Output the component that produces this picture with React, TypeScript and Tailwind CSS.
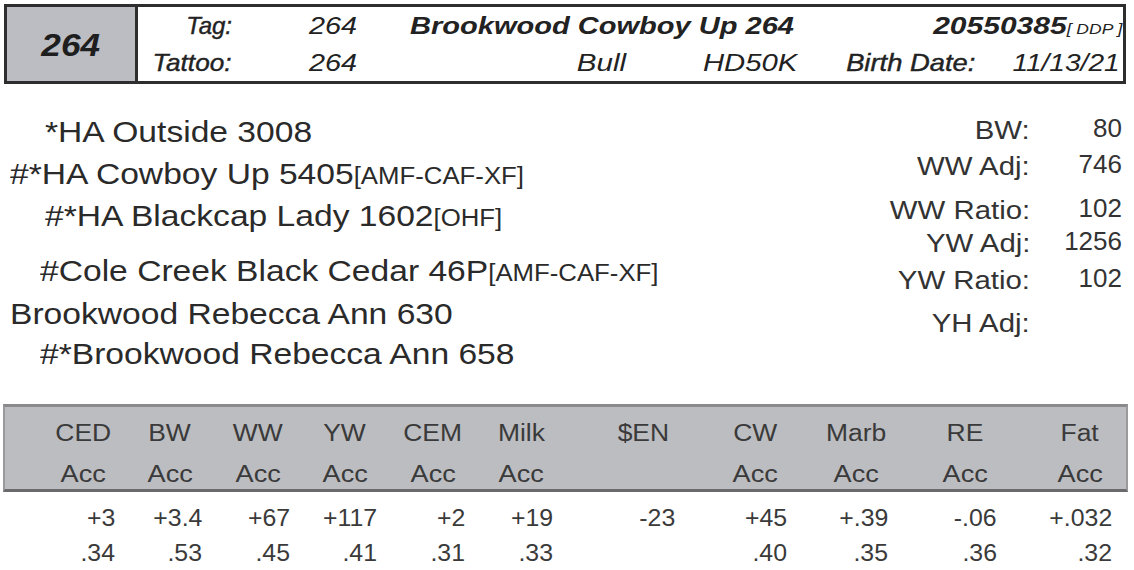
import React from 'react';

const pedigree = [
  { name: '*HA Outside 3008', tag: '', indent: 'pl-[45px]', box: 'h-[42px] mt-[26px]' },
  { name: '#*HA Cowboy Up 5405', tag: '[AMF-CAF-XF]', indent: 'pl-[10px]', box: 'h-[42px]' },
  { name: '#*HA Blackcap Lady 1602', tag: '[OHF]', indent: 'pl-[45px]', box: 'h-[42px]' },
  { name: '#Cole Creek Black Cedar 46P', tag: '[AMF-CAF-XF]', indent: 'pl-[40px]', box: 'h-[42px] mt-[13px]' },
  { name: 'Brookwood Rebecca Ann 630', tag: '', indent: 'pl-[10px]', box: 'h-[44px]' },
  { name: '#*Brookwood Rebecca Ann 658', tag: '', indent: 'pl-[40px]', box: 'h-[36px]' },
];

const stats = [
  { label: 'BW:', value: '80', box: 'mt-[29px]' },
  { label: 'WW Adj:', value: '746', box: 'mt-[2px]' },
  { label: 'WW Ratio:', value: '102', box: 'mt-[10px]' },
  { label: 'YW Adj:', value: '1256', box: 'mt-[-1px]' },
  { label: 'YW Ratio:', value: '102', box: 'mt-[3px]' },
  { label: 'YH Adj:', value: '', box: 'mt-[9px]' },
];

const epds = [
  { trait: 'CED', epd: '+3', acc: '.34', col: 'w-[87px]' },
  { trait: 'BW', epd: '+3.4', acc: '.53', col: 'w-[88px]' },
  { trait: 'WW', epd: '+67', acc: '.45', col: 'w-[87px]' },
  { trait: 'YW', epd: '+117', acc: '.41', col: 'w-[88px]' },
  { trait: 'CEM', epd: '+2', acc: '.31', col: 'w-[88px]' },
  { trait: 'Milk', epd: '+19', acc: '.33', col: 'w-[122px]' },
  { trait: '$EN', epd: '-23', acc: '', col: 'w-[112px]' },
  { trait: 'CW', epd: '+45', acc: '.40', col: 'w-[101px]' },
  { trait: 'Marb', epd: '+.39', acc: '.35', col: 'w-[109px]' },
  { trait: 'RE', epd: '-.06', acc: '.36', col: 'w-[115px]' },
  { trait: 'Fat', epd: '+.032', acc: '.32', col: 'w-[62px]' },
];

// the printed sheet uses a wider face than Arial, so stretch the glyphs a bit
function Wide({ children, className }: { children: React.ReactNode; className: string }) {
  return <span className={`inline-block whitespace-nowrap ${className}`}>{children}</span>;
}

export default function App() {
  return (
    <div className="w-[1134px] h-[570px] bg-white text-[#222] font-['Liberation_Sans',Arial,sans-serif] overflow-hidden">
      {/* Header box */}
      <div className="ml-[4px] mt-[4px] w-[1122px] h-[80px] border-[3px] border-[#2e2e2e] flex">
        <div className="w-[131px] shrink-0 bg-[#bcbdc2] border-r-[3px] border-[#2e2e2e] flex items-center justify-center">
          <Wide className="text-[32px] font-bold italic text-[#1e1e1e] scale-x-[1.1] mt-[2px]">264</Wide>
        </div>
        <div className="flex-1 flex flex-col pt-[1px] text-[24px] italic">
          <div className="h-[37px] flex items-center">
            <span className="w-[94px] text-right [-webkit-text-stroke:0.4px]">Tag:</span>
            <span className="w-[178px] text-right pr-[53px]">
              <Wide className="scale-x-[1.2] origin-right">264</Wide>
            </span>
            <Wide className="font-bold scale-x-[1.21] origin-left">Brookwood Cowboy Up 264</Wide>
            <span className="flex-1 text-right pr-[1px]">
              <Wide className="font-bold scale-x-[1.25] origin-right">
                20550385<span className="text-[14px] font-normal">[ DDP ]</span>
              </Wide>
            </span>
          </div>
          <div className="h-[37px] flex items-center">
            <span className="w-[94px] text-right">
              <Wide className="scale-x-[1.09] origin-right [-webkit-text-stroke:0.4px]">Tattoo:</Wide>
            </span>
            <span className="w-[178px] text-right pr-[53px]">
              <Wide className="scale-x-[1.2] origin-right">264</Wide>
            </span>
            <span className="w-[216px] text-right">
              <Wide className="scale-x-[1.23] origin-right">Bull</Wide>
            </span>
            <span className="w-[171px] text-right">
              <Wide className="scale-x-[1.22] origin-right">HD50K</Wide>
            </span>
            <span className="w-[178px] text-right">
              <Wide className="scale-x-[1.14] origin-right [-webkit-text-stroke:0.4px]">Birth Date:</Wide>
            </span>
            <span className="flex-1 text-right pr-[3px]">
              <Wide className="scale-x-[1.17] origin-right">11/13/21</Wide>
            </span>
          </div>
        </div>
      </div>

      {/* Pedigree + stats */}
      <div className="flex h-[320px]">
        <div className="flex-1 flex flex-col text-[30px] text-[#2a2a2a]">
          {pedigree.map((p) => (
            <div key={p.name} className={`${p.box} ${p.indent} flex items-center`}>
              <Wide className="scale-x-[1.12] origin-left">
                {p.name}
                {p.tag && <span className="text-[23px]">{p.tag}</span>}
              </Wide>
            </div>
          ))}
        </div>
        <div className="w-[300px] pr-[12px] flex flex-col text-[26px] text-[#333]">
          {stats.map((s) => (
            <div key={s.label} className={`${s.box} flex items-start`}>
              <span className="flex-1 text-right leading-[34px]">
                <Wide className="scale-x-[1.13] origin-right">{s.label}</Wide>
              </span>
              <span className="w-[92px] text-right leading-[30px]">{s.value}</span>
            </div>
          ))}
        </div>
      </div>

      {/* EPD table */}
      <div className="text-[23px] text-[#3a3a3a]">
        <div className="ml-[3px] w-[1125px] h-[88px] bg-[#bcbdc1] border-t-[3px] border-b-[3px] border-x-[2px] border-t-[#8a8a8c] border-b-[#6a6a6c] border-x-[#9a9a9c] flex pl-[47px]">
          {epds.map((e) => (
            <div key={e.trait} className={`${e.col} shrink-0`}>
              <div className="w-[62px] flex flex-col">
                <span className="h-[52px] flex items-center justify-center">
                  <Wide className="scale-x-[1.15]">{e.trait}</Wide>
                </span>
                <span className="h-[30px] flex items-center justify-center">
                  {e.acc && <Wide className="scale-x-[1.18]">Acc</Wide>}
                </span>
              </div>
            </div>
          ))}
        </div>
        <div className="flex pl-[52px] pt-[8px]">
          {epds.map((e) => (
            <div key={e.trait} className={`${e.col} shrink-0`}>
              <div className="w-[63px] flex flex-col">
                <span className="h-[36px] flex items-center justify-end">
                  <Wide className="scale-x-[1.08] origin-right">{e.epd}</Wide>
                </span>
                <span className="h-[34px] flex items-center justify-end">
                  <Wide className="scale-x-[1.08] origin-right">{e.acc}</Wide>
                </span>
              </div>
            </div>
          ))}
        </div>
      </div>
    </div>
  );
}
